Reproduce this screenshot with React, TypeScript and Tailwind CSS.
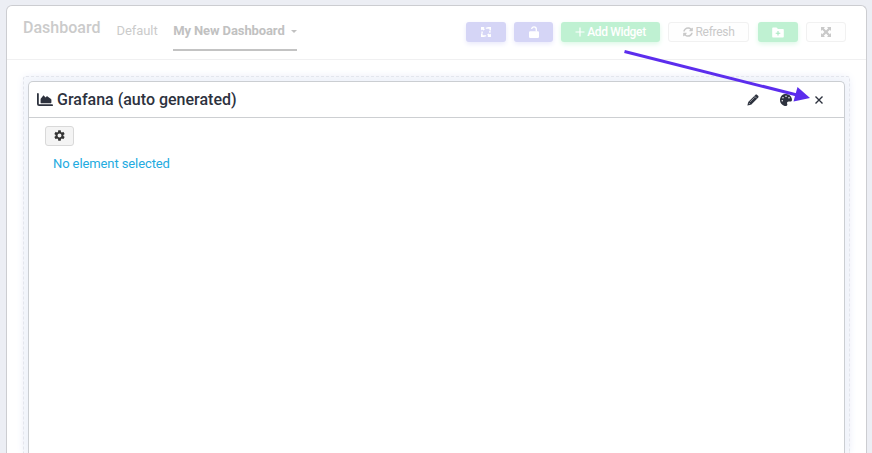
import React from "react";
import { FaPalette, FaSyncAlt } from "react-icons/fa";
import { MdSettings } from "react-icons/md";

function MarqueeIcon() {
  return (
    <svg width="10" height="10" viewBox="0 0 10 10" fill="#fff">
      <path d="M0 0h3.6L2.7 1l1.2 1.2-1.4 1.4L1 2.5 0 3.6ZM10 0v3.6H8.4V1.8H4.8V.4h1.6L6.4 0ZM10 10H6.4l.9-1-1.2-1.2 1.4-1.4L9 7.5l1-1.1ZM0 10V6.4h1.6v1.8h3.6v1.4H3.6V10ZM8.2 4h1.4v1.8H8.2ZM.4 4.4h1.4v1.8H.4Z" />
    </svg>
  );
}

function UnlockIcon() {
  return (
    <svg width="10" height="12" viewBox="0 0 10 12" className="-mt-px">
      <rect x="0" y="5.2" width="10" height="6.8" rx="1.2" fill="#fff" />
      <path d="M2.7 3.1A2.3 2.3 0 0 1 7.3 3.2V5.5" fill="none" stroke="#fff" strokeWidth="1.3" />
    </svg>
  );
}

function FolderIcon() {
  return (
    <svg width="12" height="11" viewBox="0 0 12 11">
      <path d="M1.2.5h3.3L6 2h4.8c.6 0 1 .4 1 1v6.5c0 .6-.4 1-1 1H1.2c-.6 0-1-.4-1-1v-8c0-.6.4-1 1-1Z" fill="#fff" />
      <path d="M6 4v4.6M3.7 6.3h4.6" stroke="#a8e8c1" strokeWidth="1.1" />
    </svg>
  );
}

function ExpandIcon() {
  return (
    <svg width="10" height="10" viewBox="0 0 10 10" fill="#c9c9c9">
      <path d="M0 0h4L2.8 1.2 5 3.4l2.2-2.2L6 0h4v4L8.8 2.8 6.6 5l2.2 2.2L10 6v4H6l1.2-1.2L5 6.6 2.8 8.8 4 10H0V6l1.2 1.2L3.4 5 1.2 2.8 0 4Z" />
    </svg>
  );
}

function AreaIcon() {
  return (
    <svg width="16" height="14" viewBox="0 0 16 14" fill="currentColor">
      <path d="M.9.9v10.1c0 .8.5 1.2 1.2 1.2h13" fill="none" stroke="currentColor" strokeWidth="1.8" strokeLinecap="round" />
      <path d="M3.6 9.8V6.2c0-.3.1-.6.3-.8l2-2.5c.3-.4.8-.4 1.1-.1l1.5 1.6 1-1c.3-.3.8-.3 1.1 0l3.4 2.6c.3.3.4.6.4 1v2.2c0 .6-.4 1-1 1H4c-.2 0-.4-.1-.4-.4Z" />
    </svg>
  );
}

function PencilIcon() {
  return (
    <svg width="12" height="12" viewBox="0 0 12 12">
      <path d="M.4 11.6l.8-3.7L8.3.9c.6-.6 1.3-.6 1.9 0l.9.9c.6.6.6 1.3 0 1.9l-7 7.1Z" fill="currentColor" />
      <path d="M3 7.9L7.5 3.4M7.6 2.2l2.2 2.2M1.7 8.8l1.5 1.5" stroke="#fff" strokeWidth=".5" />
    </svg>
  );
}

function Toolbar() {
  const base = "flex h-5 shrink-0 items-center justify-center rounded-[3px]";
  const purple = "bg-[#d5d5f6] text-white shadow-[0_2px_5px_#e9e9fb]";
  const green = "bg-[#bff1d2] text-white shadow-[0_2px_5px_#dcf8e7]";
  const light = "border border-[#f1f1f1] bg-[#fefefe] text-[#c9c9c9]";
  return (
    <div className="ml-auto mr-[20px] mt-4 flex h-5 text-[12px] leading-5">
      <button className={`${base} ${purple} w-10`}><MarqueeIcon /></button>
      <button className={`${base} ${purple} ml-2 w-[39px]`}><UnlockIcon /></button>
      <button className={`${base} ${green} ml-2 w-[99px] font-medium`}>
        <svg className="mr-[2px]" width="10" height="10" viewBox="0 0 10 10" stroke="white" strokeWidth="1.2"><path d="M5 .5v9M.5 5h9" /></svg>
        <span className="tracking-[-0.35px]">Add Widget</span>
      </button>
      <button className={`${base} ${light} ml-2 w-[81px]`}>
        <FaSyncAlt size={10} className="mr-[3px]" />
        <span className="tracking-[-0.3px]">Refresh</span>
      </button>
      <button className={`${base} ${green} ml-[9px] w-10`}><FolderIcon /></button>
      <button className={`${base} ${light} ml-2 w-10`}><ExpandIcon /></button>
    </div>
  );
}

function Widget() {
  return (
    <section className="h-full rounded-t-[5px] border border-b-0 border-[#cbced2] bg-white shadow-[0_0_12px_#e9edf8]">
      <header className="flex h-9 items-center border-b border-[#cdcfd2] pl-2 text-[#2d323e]">
        <AreaIcon />
        <h2 className="ml-1 whitespace-nowrap text-[16px] font-medium leading-5">Grafana (auto generated)</h2>
        <div className="ml-auto mr-[21px] flex items-center">
          <PencilIcon />
          <FaPalette size={12} className="ml-[21px]" />
          <svg className="ml-[23px]" width="8" height="8" viewBox="0 0 8 8" stroke="currentColor" strokeWidth="1.4"><path d="M.5.5l7 7M7.5.5l-7 7" /></svg>
        </div>
      </header>
      <div className="pl-4 pt-2">
        <button className="flex h-5 w-[29px] items-center justify-center rounded-[3px] border border-[#d9d9d9] bg-[#f4f4f4] pb-px text-[#333]"><MdSettings size={13} /></button>
        <p className="ml-2 mt-2 text-[13px] leading-[19px] tracking-[-0.1px] text-[#23abdf]">No element selected</p>
      </div>
    </section>
  );
}

export default function App() {
  return (
    <div className="relative h-[453px] w-[872px] overflow-hidden bg-[#eceef4] pl-[6px] pr-[5px] pt-[5px] font-['Roboto',sans-serif]">
      <main className="flex h-[448px] flex-col rounded-t-[6px] border border-b-0 border-[#cccdd1] bg-white">
        <nav className="flex h-[54px] shrink-0 border-b border-[#f0f0f1] pl-4">
          <h1 className="mt-[12px] text-[16px] font-medium leading-5 text-[#cbcbcb]">Dashboard</h1>
          <a className="ml-4 mt-[15px] text-[13px] leading-5 tracking-[-0.05px] text-[#cbcbcb]">Default</a>
          <a className="ml-[15px] flex h-[45px] w-[124px] border-b-2 border-[#c3c3c3] pt-[15px] text-[13px] font-bold leading-5 text-[#c1c1c1]">
            <span className="whitespace-nowrap pl-[0.5px] tracking-[-0.1px]">My New Dashboard</span>
            <span className="ml-auto mt-[9px] h-0 w-0 border-x-[3px] border-t-[3px] border-x-transparent border-t-[#c1c1c1]" />
          </a>
          <Toolbar />
        </nav>
        <div className="min-h-0 flex-1 px-4 pt-4">
          <div className="h-full rounded-t-[3px] border border-b-0 border-dashed border-[#e2e4ea] bg-[#f7f9fd] px-[4px] pt-[4px] shadow-[0_0_9px_#f2f4fb]">
            <Widget />
          </div>
        </div>
      </main>
      <svg className="pointer-events-none absolute inset-0" width="872" height="453" viewBox="0 0 872 453">
        <path d="M624.5 51.5L799 95.5" stroke="#5c2ded" strokeWidth="3" />
        <path d="M797.5 87L810 98L793.5 101.5Z" fill="#5c2ded" />
      </svg>
    </div>
  );
}
